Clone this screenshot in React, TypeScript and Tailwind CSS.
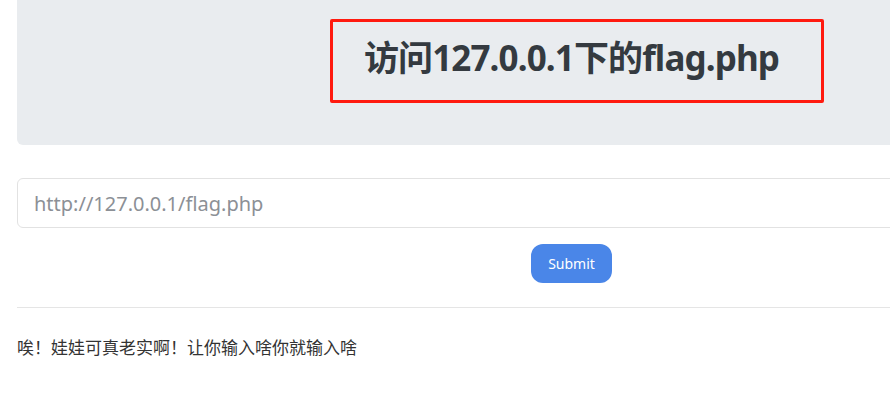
import React from 'react';

const App: React.FC = () => {
  return (
    <div
      className="w-[890px] h-[398px] overflow-hidden bg-white"
      style={{ fontFamily: '"Noto Sans", "Noto Sans CJK SC", sans-serif' }}
    >
      <div className="w-[1109px] ml-[17px]">
        {/* Jumbotron */}
        <div className="relative h-[155px] mt-[-10px] bg-[#e9ecef] rounded-md flex items-center justify-center pt-[10px]">
          <h1 className="text-[35px] font-bold text-[#343a40] leading-none tracking-tight mt-[-30px]">
            访问127.0.0.1下的flag.php
          </h1>
          {/* Annotation box */}
          <div className="absolute left-[313px] top-[29px] w-[494px] h-[84px] border-[3px] border-[#ff1a0f] rounded-[2px]"></div>
        </div>

        {/* Form */}
        <form className="mt-[33px] flex flex-col items-center">
          <input
            type="text"
            placeholder="http://127.0.0.1/flag.php"
            className="w-full h-[50px] px-4 text-[20px] border border-[#e2e2e2] rounded-md placeholder:text-[#8c9096] outline-none"
          />
          <button
            type="button"
            className="mt-[16px] w-[81px] h-[39px] rounded-[12px] bg-[#4a86e8] text-white text-[14px]"
          >
            Submit
          </button>
        </form>

        <hr className="mt-[24px] border-t border-[#e5e5e5]" />

        <p className="mt-[27px] text-[17px] text-[#333]">
          唉！娃娃可真老实啊！让你输入啥你就输入啥
        </p>
      </div>
    </div>
  );
};

export default App;
